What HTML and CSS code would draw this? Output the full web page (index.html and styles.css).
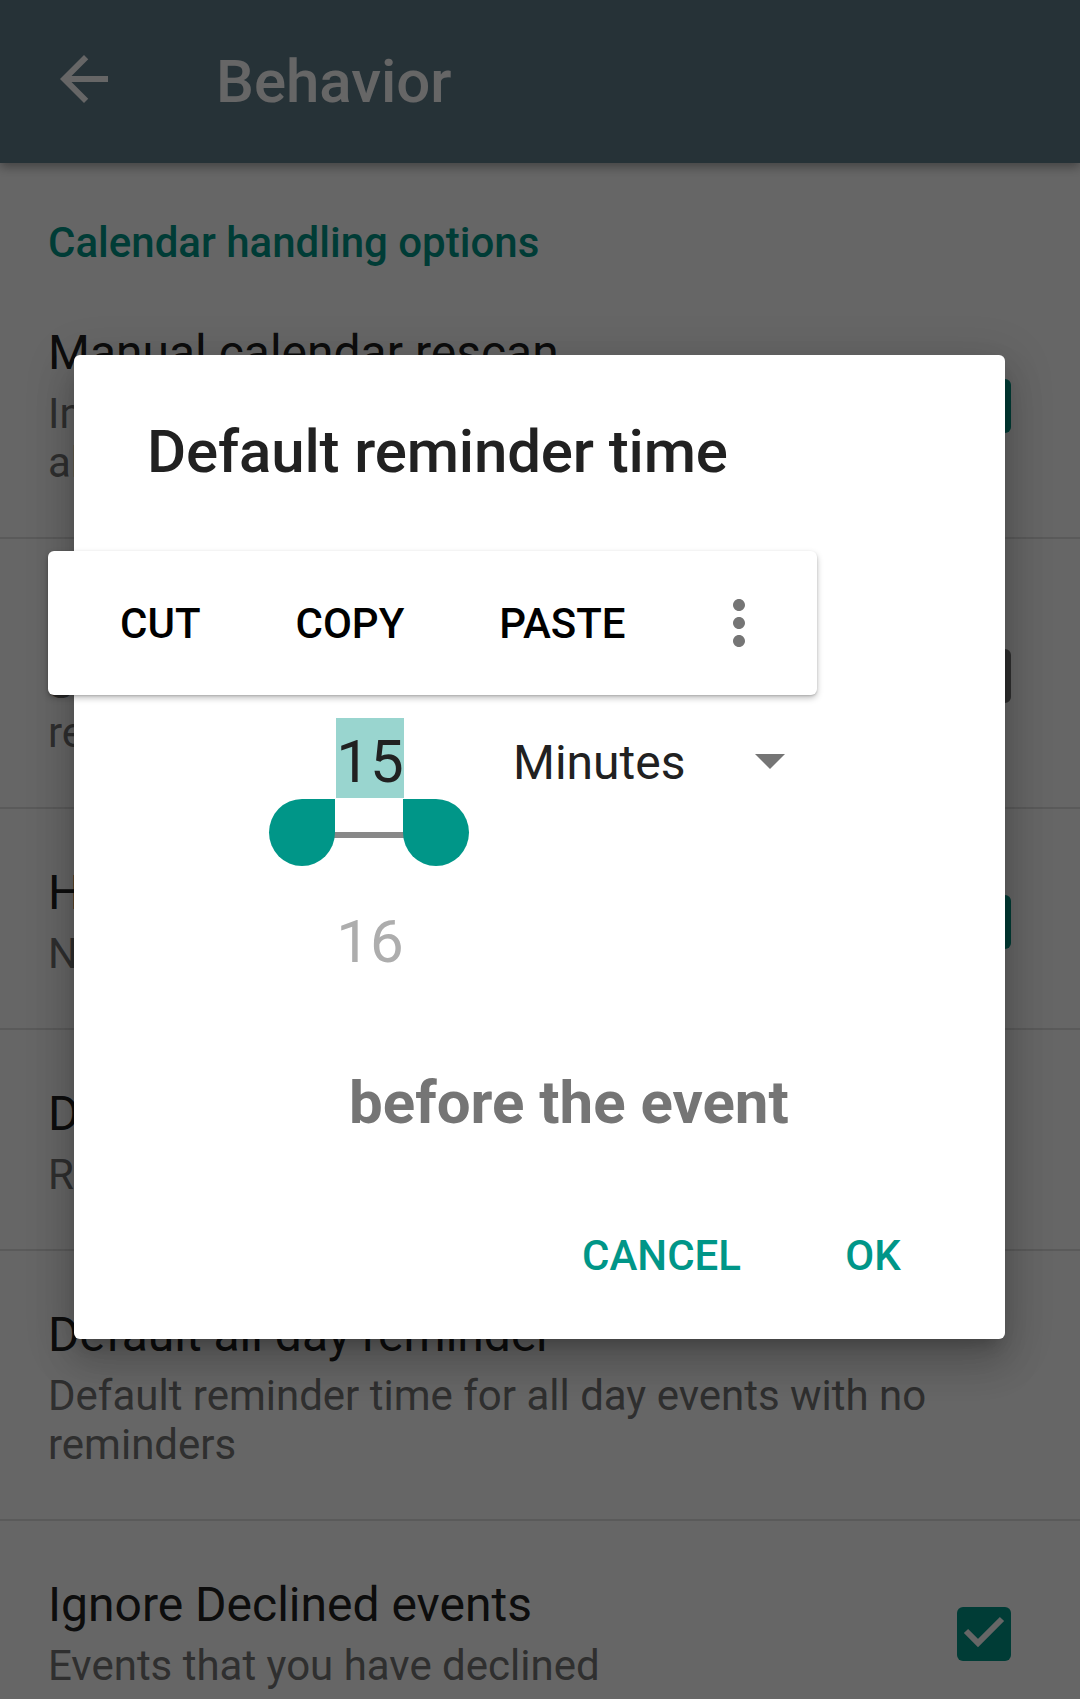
FILE: index.html
```html
<!DOCTYPE html>
<html lang="en">
<head>
<meta charset="utf-8">
<title>Behavior</title>
<link rel="stylesheet" href="styles.css">
</head>
<body>
<div class="screen">
  <header class="appbar">
    <svg class="back" viewBox="0 0 24 24" aria-hidden="true"><path d="M20 11H7.83l5.59-5.59L12 4l-8 8 8 8 1.41-1.41L7.83 13H20v-2z"/></svg>
    <h1 class="appbar-title">Behavior</h1>
  </header>

  <main class="prefs">
    <div class="pref-category">Calendar handling options</div>

    <div class="pref">
      <div class="pref-text">
        <div class="pref-title">Manual calendar rescan</div>
        <div class="pref-summary">In addition to system calendar notifications, also rescan calendars periodically</div>
      </div>
      <span class="checkbox checked"><svg viewBox="0 0 54 54"><polyline points="9,24 21,36 45,12"/></svg></span>
    </div>

    <div class="pref">
      <div class="pref-text">
        <div class="pref-title">Keep deleted events</div>
        <div class="pref-summary">Show notifications for deleted events and remove them only when dismissed</div>
      </div>
      <span class="checkbox"></span>
    </div>

    <div class="pref">
      <div class="pref-text">
        <div class="pref-title">Handle events with no reminders</div>
        <div class="pref-summary">Notify about events with no reminders</div>
      </div>
      <span class="checkbox checked"><svg viewBox="0 0 54 54"><polyline points="9,24 21,36 45,12"/></svg></span>
    </div>

    <div class="pref">
      <div class="pref-text">
        <div class="pref-title">Default reminder time</div>
        <div class="pref-summary">Reminder time for events with no reminders</div>
      </div>
    </div>

    <div class="pref">
      <div class="pref-text">
        <div class="pref-title">Default all day reminder</div>
        <div class="pref-summary">Default reminder time for all day events with no reminders</div>
      </div>
    </div>

    <div class="pref">
      <div class="pref-text">
        <div class="pref-title">Ignore Declined events</div>
        <div class="pref-summary">Events that you have declined</div>
      </div>
      <span class="checkbox checked"><svg viewBox="0 0 54 54"><polyline points="9,24 21,36 45,12"/></svg></span>
    </div>
  </main>

  <div class="scrim"></div>

  <div class="dialog">
    <h2 class="dialog-title">Default reminder time</h2>
    <div class="picker-row">
      <div class="number-picker">
        <div class="np-item np-faded">14</div>
        <div class="np-item"><span class="np-selection">15</span></div>
        <div class="np-item np-faded">16</div>
        <div class="np-divider np-divider-top"></div>
        <div class="np-divider np-divider-bottom"></div>
        <span class="handle handle-left"></span>
        <span class="handle handle-right"></span>
      </div>
      <div class="spinner">
        <span class="spinner-text">Minutes</span>
        <svg class="spinner-arrow" viewBox="0 0 30 15" aria-hidden="true"><path d="M0 0h30L15 15z"/></svg>
      </div>
    </div>
    <p class="dialog-note">before the event</p>
    <div class="dialog-actions">
      <button class="dialog-btn">CANCEL</button>
      <button class="dialog-btn">OK</button>
    </div>
  </div>

  <div class="text-toolbar">
    <span class="tb-btn">CUT</span>
    <span class="tb-btn">COPY</span>
    <span class="tb-btn">PASTE</span>
    <svg class="tb-more" viewBox="0 0 24 24" aria-hidden="true"><path d="M12 8c1.1 0 2-.9 2-2s-.9-2-2-2-2 .9-2 2 .9 2 2 2zm0 2c-1.1 0-2 .9-2 2s.9 2 2 2 2-.9 2-2-.9-2-2-2zm0 6c-1.1 0-2 .9-2 2s.9 2 2 2 2-.9 2-2-.9-2-2-2z"/></svg>
  </div>
</div>
</body>
</html>
```

FILE: styles.css
```css
* {
  box-sizing: border-box;
  margin: 0;
  padding: 0;
}

html, body {
  width: 1080px;
  height: 1699px;
  overflow: hidden;
}

body {
  font-family: Roboto, "Noto Sans", sans-serif;
  background: #fff;
}

.screen {
  position: relative;
  width: 1080px;
  height: 1699px;
  overflow: hidden;
  background: #fff;
}

/* App bar */
.appbar {
  position: relative;
  z-index: 1;
  height: 163px;
  display: flex;
  align-items: center;
  padding: 0 0 5px 48px;
  background: #607d8b;
  box-shadow: 0 4px 10px rgba(0, 0, 0, 0.35);
}

.back {
  width: 72px;
  height: 72px;
  fill: #fff;
  flex: none;
}

.appbar-title {
  margin: 5px 0 0 96px;
  font-size: 60px;
  line-height: 70px;
  font-weight: 500;
  color: #fff;
}

/* Preference list */
.pref-category {
  padding: 54px 48px 0 48px;
  height: 106px;
  font-size: 42px;
  line-height: 51px;
  font-weight: 500;
  color: #009688;
}

.pref {
  display: flex;
  align-items: center;
  padding: 56px 69px 50px 48px;
  border-bottom: 2px solid #e0e0e0;
}

.pref-text {
  flex: 1;
  margin-right: 48px;
}

.pref-title {
  font-size: 48px;
  line-height: 56px;
  color: #212121;
}

.pref-summary {
  margin-top: 8px;
  font-size: 42px;
  line-height: 49px;
  color: #757575;
}

.checkbox {
  flex: none;
  width: 54px;
  height: 54px;
  border: 6px solid #757575;
  border-radius: 6px;
}

.checkbox.checked {
  border: none;
  background: #009688;
}

.checkbox svg {
  display: block;
  width: 54px;
  height: 54px;
  fill: none;
  stroke: #fff;
  stroke-width: 6;
}

/* Scrim */
.scrim {
  position: absolute;
  inset: 0;
  z-index: 2;
  background: rgba(0, 0, 0, 0.6);
}

/* Dialog */
.dialog {
  position: absolute;
  z-index: 3;
  left: 74px;
  top: 355px;
  width: 931px;
  padding: 62px 0 59px;
  background: #fff;
  border-radius: 6px;
  box-shadow: 0 24px 38px 3px rgba(0, 0, 0, 0.14),
              0 9px 46px 8px rgba(0, 0, 0, 0.12),
              0 11px 15px -7px rgba(0, 0, 0, 0.2);
}

.dialog-title {
  padding-left: 73px;
  font-size: 60px;
  line-height: 70px;
  font-weight: 500;
  letter-spacing: -0.15px;
  color: #212121;
}

.picker-row {
  display: flex;
  align-items: flex-start;
  margin-top: 5px;
  padding-left: 196px;
}

.number-picker {
  position: relative;
  width: 200px;
  flex: none;
  text-align: center;
  font-size: 60px;
  color: #212121;
}

.np-item {
  height: 180px;
  line-height: 180px;
}

.np-faded {
  color: #adadad;
}

.np-selection {
  display: inline-block;
  padding-top: 7px;
  line-height: 73px;
  background: #99d5cf;
}

.np-divider {
  position: absolute;
  left: 1px;
  right: 3px;
  height: 6px;
  background: #888;
}

.np-divider-top { top: 190px; }
.np-divider-bottom { top: 340px; }

.handle {
  position: absolute;
  top: 307px;
  width: 66px;
  height: 67px;
  background: #009688;
}

.handle-left {
  left: -1px;
  border-radius: 50% 0 50% 50%;
}

.handle-right {
  left: 133px;
  border-radius: 0 50% 50% 50%;
}

.spinner {
  display: flex;
  align-items: center;
  margin: 243px 0 0 43px;
}

.spinner-text {
  font-size: 48px;
  line-height: 56px;
  color: #212121;
}

.spinner-arrow {
  width: 30px;
  height: 15px;
  margin: -4px 0 0 70px;
  fill: #757575;
}

.dialog-note {
  margin-top: 36px;
  padding-left: 275px;
  font-size: 60px;
  line-height: 70px;
  font-weight: 700;
  color: #757575;
}

.dialog-actions {
  display: flex;
  justify-content: flex-end;
  gap: 12px;
  margin-top: 93px;
  padding-right: 36px;
}

.dialog-btn {
  min-width: 192px;
  padding: 0 24px;
  border: 0;
  background: none;
  font-family: Roboto, "Noto Sans", sans-serif;
  font-size: 42px;
  line-height: 49px;
  font-weight: 500;
  color: #009688;
  text-align: center;
}

/* Floating text selection toolbar */
.text-toolbar {
  position: absolute;
  z-index: 4;
  left: 48px;
  top: 551px;
  width: 769px;
  height: 144px;
  display: flex;
  align-items: center;
  padding: 0 42px 0 72px;
  background: #fff;
  border-radius: 6px;
  box-shadow: 0 3px 6px rgba(0, 0, 0, 0.25), 0 1px 2px rgba(0, 0, 0, 0.15);
}

.tb-btn {
  font-size: 42px;
  line-height: 49px;
  font-weight: 500;
  color: #000;
}

.tb-btn + .tb-btn {
  margin-left: 95px;
}

.tb-more {
  width: 72px;
  height: 72px;
  margin-left: auto;
  fill: #757575;
}
```
